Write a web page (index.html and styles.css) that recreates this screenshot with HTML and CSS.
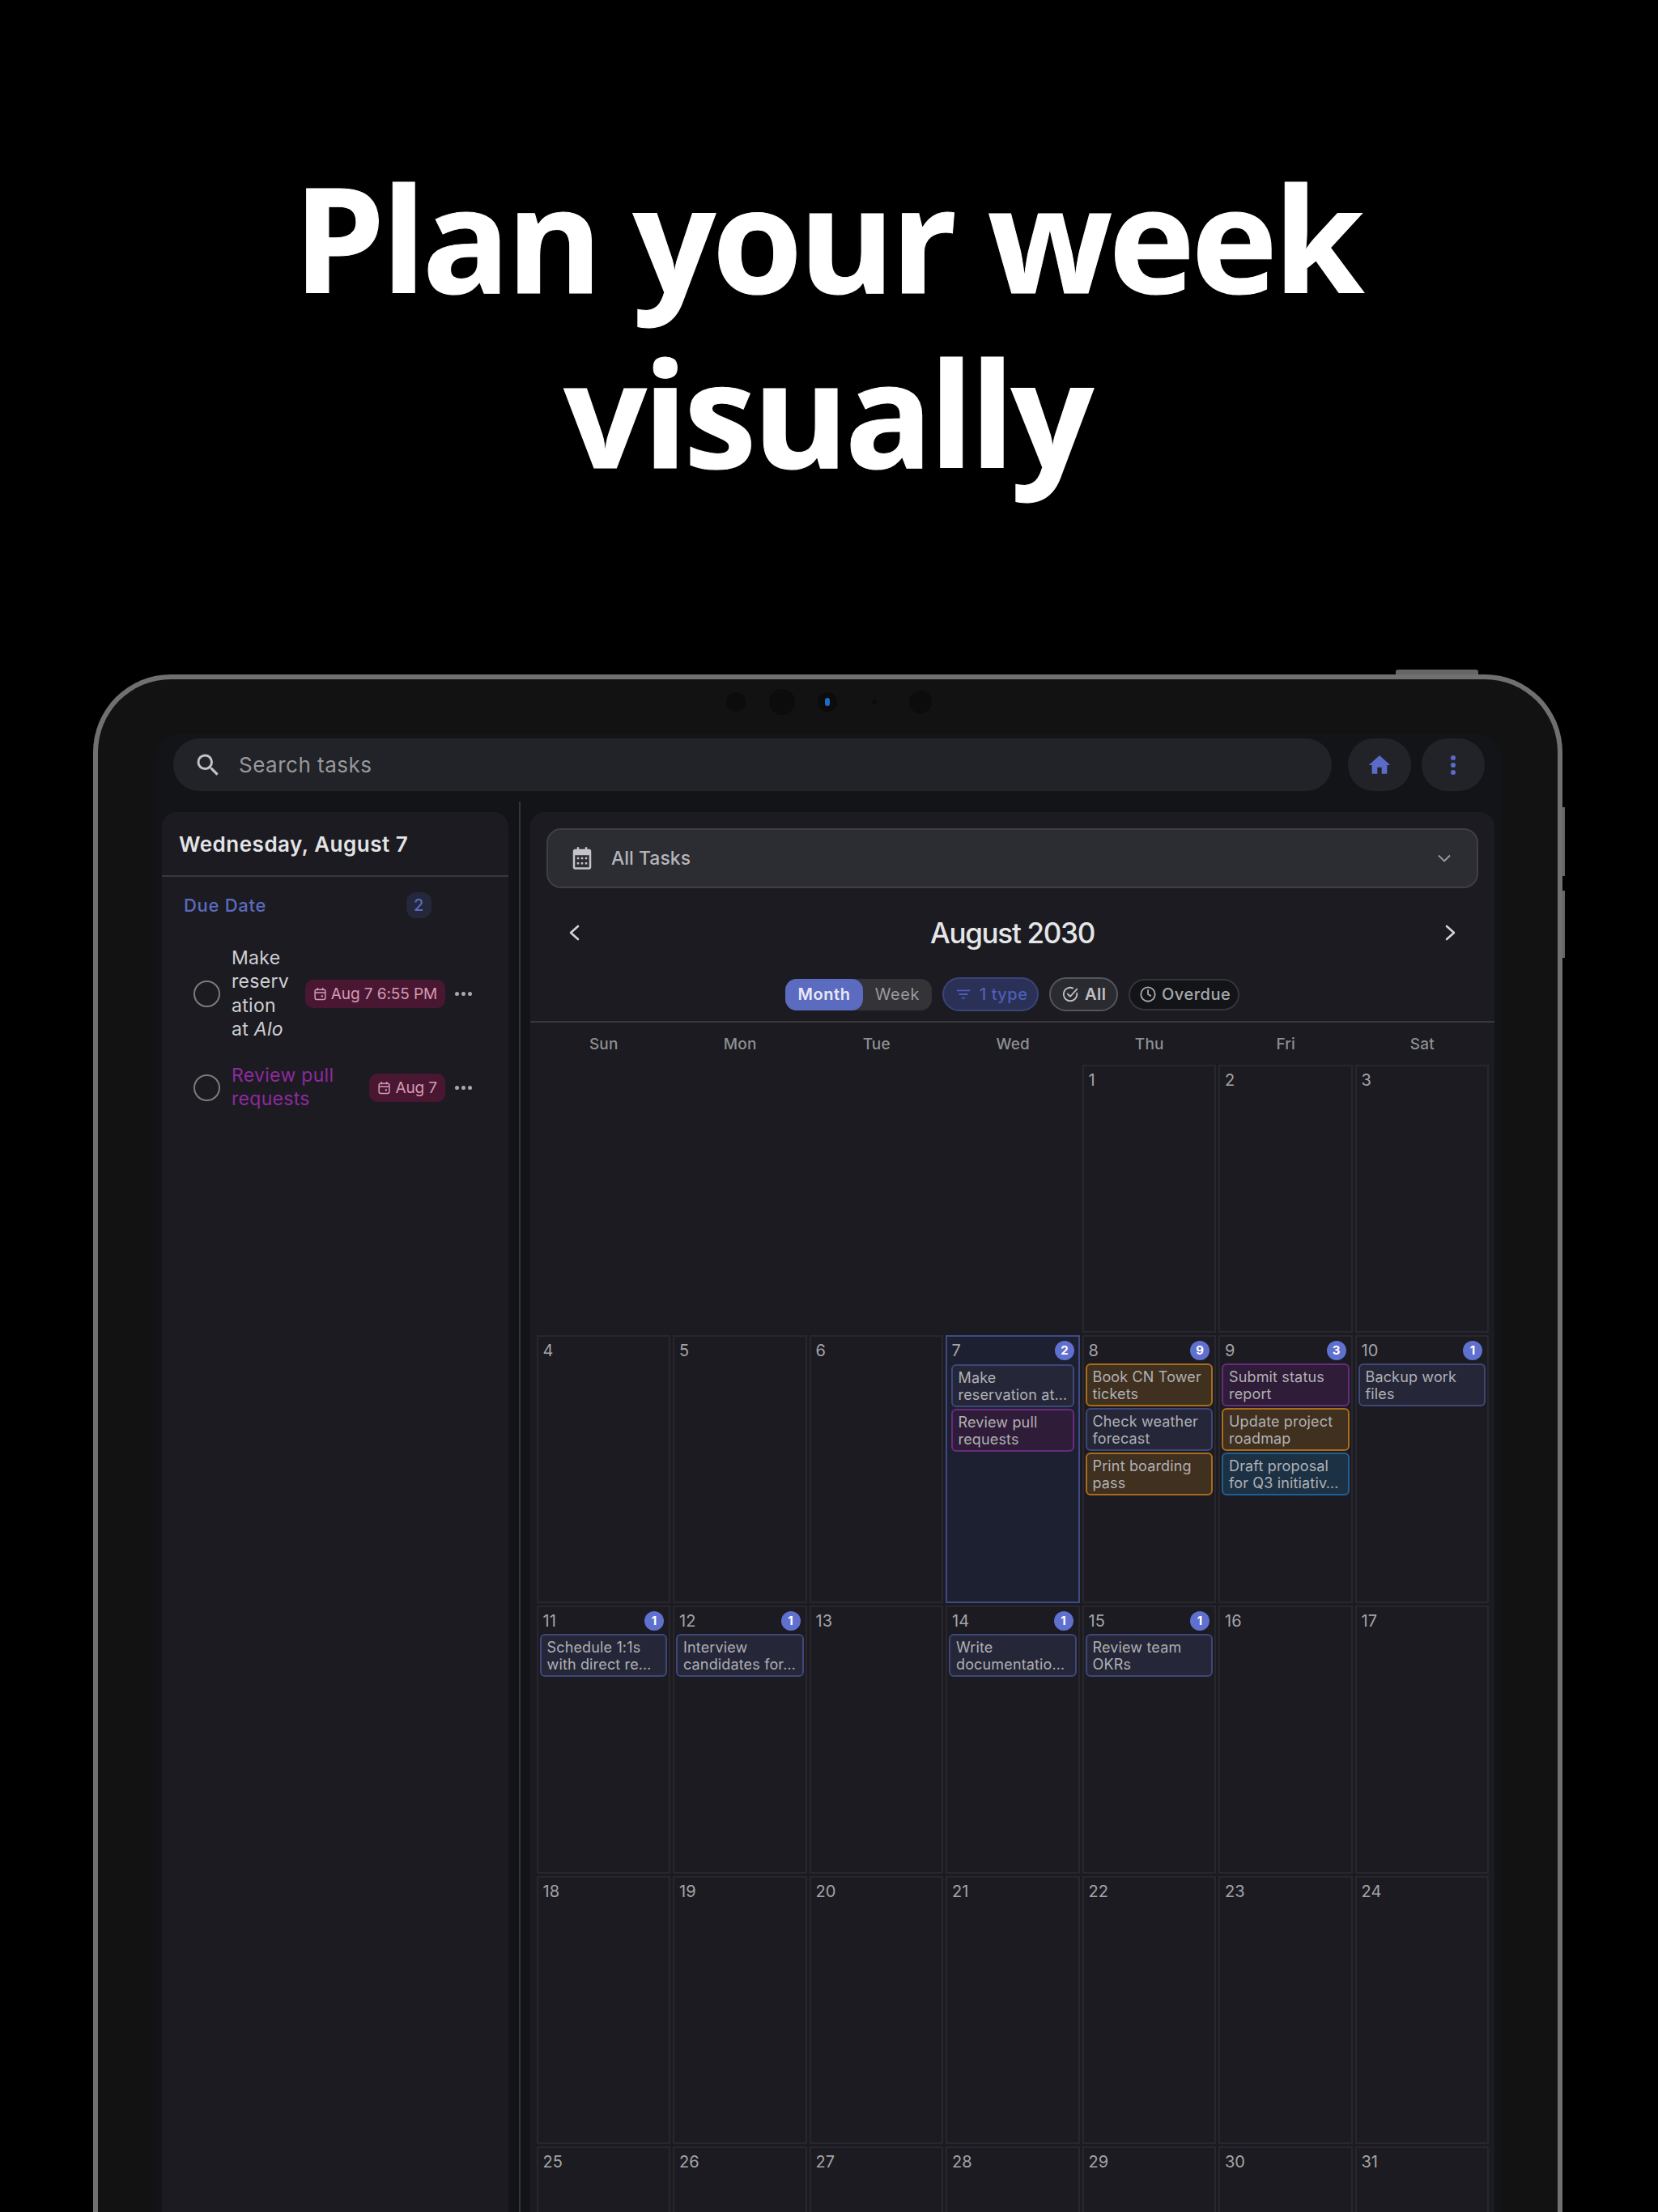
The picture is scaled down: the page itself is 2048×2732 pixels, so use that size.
FILE: index.html
```html
<!DOCTYPE html>
<html lang="en">

<head>
    <meta charset="UTF-8">
    <title>Plan your week visually</title>
    <link rel="stylesheet" href="styles.css">
</head>

<body>
    <h1 class="headline">Plan your week<br>visually</h1>

    <div class="device">
        <span class="btn-top"></span>
        <span class="btn-side btn-side-1"></span>
        <span class="btn-side btn-side-2"></span>

        <div class="cameras">
            <span class="cam cam-a"></span>
            <span class="cam cam-b"></span>
            <span class="cam cam-c"><i></i></span>
            <span class="cam cam-d"></span>
            <span class="cam cam-e"></span>
        </div>

        <div class="screen">
            <div class="topbar">
                <div class="search">
                    <svg class="search-icon" viewBox="0 0 24 24" fill="currentColor"><path d="M15.5 14h-.79l-.28-.27A6.47 6.47 0 0 0 16 9.5 6.5 6.5 0 1 0 9.5 16c1.61 0 3.09-.59 4.23-1.57l.27.28v.79l5 4.99L20.49 19l-4.99-5zm-6 0C7.01 14 5 11.99 5 9.5S7.01 5 9.5 5 14 7.01 14 9.5 11.99 14 9.5 14z"/></svg>
                    <span>Search tasks</span>
                </div>
                <div class="round-btn home-btn">
                    <svg viewBox="0 0 24 24" fill="currentColor"><path d="M10 20v-6h4v6h5v-8h3L12 3 2 12h3v8z"/></svg>
                </div>
                <div class="round-btn">
                    <svg viewBox="0 0 24 24" fill="currentColor"><circle cx="12" cy="6" r="2"/><circle cx="12" cy="12" r="2"/><circle cx="12" cy="18" r="2"/></svg>
                </div>
            </div>

            <div class="main">
                <div class="day-panel">
                    <div class="day-title">Wednesday, August 7</div>
                    <div class="section-head">
                        <span>Due Date</span>
                        <span class="section-count">2</span>
                    </div>

                    <div class="task">
                        <span class="task-circle"></span>
                        <div class="task-text">Make reservation at <em>Alo</em></div>
                        <div class="date-chip">
                            <svg viewBox="0 0 16 16" fill="none" stroke="currentColor" stroke-width="1.4"><rect x="2" y="3" width="12" height="11.5" rx="2"/><path d="M2 6.5h12M5 1v3M11 1v3"/><rect x="9.2" y="9.6" width="2" height="2" fill="currentColor" stroke="none"/></svg>
                            <span>Aug 7 6:55 PM</span>
                        </div>
                        <div class="dots"><i></i><i></i><i></i></div>
                    </div>

                    <div class="task">
                        <span class="task-circle"></span>
                        <div class="task-text task-purple">Review pull requests</div>
                        <div class="date-chip">
                            <svg viewBox="0 0 16 16" fill="none" stroke="currentColor" stroke-width="1.4"><rect x="2" y="3" width="12" height="11.5" rx="2"/><path d="M2 6.5h12M5 1v3M11 1v3"/><rect x="9.2" y="9.6" width="2" height="2" fill="currentColor" stroke="none"/></svg>
                            <span>Aug 7</span>
                        </div>
                        <div class="dots"><i></i><i></i><i></i></div>
                    </div>
                </div>

                <div class="vdivider"></div>

                <div class="cal-panel">
                    <div class="dropdown">
                        <svg class="dropdown-cal" viewBox="0 0 24 24" fill="currentColor"><path fill-rule="evenodd" d="M7 1h2v2h6V1h2v2h2c1.1 0 2 .9 2 2v16c0 1.1-.9 2-2 2H5c-1.1 0-2-.9-2-2V5c0-1.1.9-2 2-2h2V1zM5 9v12h14V9H5z"/><path d="M7 11h2v2H7zM11 11h2v2h-2zM15 11h2v2h-2zM7 16h2v2H7zM11 16h2v2h-2zM15 16h2v2h-2z"/></svg>
                        <span class="dropdown-label">All Tasks</span>
                        <svg class="dropdown-arrow" viewBox="0 0 16 10" fill="none" stroke="currentColor" stroke-width="1.8"><path d="M1 1.5l7 7 7-7"/></svg>
                    </div>

                    <div class="month-nav">
                        <svg class="nav-arrow" viewBox="0 0 14 20" fill="none" stroke="currentColor" stroke-width="2.6" stroke-linecap="round" stroke-linejoin="round"><path d="M12 2L3 10l9 8"/></svg>
                        <div class="month-title">August 2030</div>
                        <svg class="nav-arrow" viewBox="0 0 14 20" fill="none" stroke="currentColor" stroke-width="2.6" stroke-linecap="round" stroke-linejoin="round"><path d="M2 2l9 8-9 8"/></svg>
                    </div>

                    <div class="toolbar">
                        <div class="segment">
                            <span class="segment-on">Month</span>
                            <span class="segment-off">Week</span>
                        </div>
                        <div class="chip chip-type">
                            <svg viewBox="0 0 24 24" fill="currentColor"><path d="M10 18h4v-2h-4v2zM3 6v2h18V6H3zm3 7h12v-2H6v2z"/></svg>
                            <span>1 type</span>
                        </div>
                        <div class="chip chip-all">
                            <svg viewBox="0 0 24 24" fill="none" stroke="currentColor" stroke-width="2" stroke-linecap="round" stroke-linejoin="round"><path d="M21 10.5V12a9 9 0 1 1-5.3-8.2"/><path d="M8.5 11.5l3.5 3.5L21 5"/></svg>
                            <span>All</span>
                        </div>
                        <div class="chip chip-overdue">
                            <svg viewBox="0 0 24 24" fill="none" stroke="currentColor" stroke-width="2" stroke-linecap="round" stroke-linejoin="round"><circle cx="12" cy="12" r="9.5"/><path d="M12 6.5V12l3.5 2"/></svg>
                            <span>Overdue</span>
                        </div>
                    </div>

                    <div class="weekdays">
                        <span>Sun</span><span>Mon</span><span>Tue</span><span>Wed</span><span>Thu</span><span>Fri</span><span>Sat</span>
                    </div>

                    <div class="month-grid">
                        <div class="blank"></div>
                        <div class="blank"></div>
                        <div class="blank"></div>
                        <div class="blank"></div>
                        <div class="cell"><div class="cell-head"><span>1</span></div></div>
                        <div class="cell"><div class="cell-head"><span>2</span></div></div>
                        <div class="cell"><div class="cell-head"><span>3</span></div></div>

                        <div class="cell"><div class="cell-head"><span>4</span></div></div>
                        <div class="cell"><div class="cell-head"><span>5</span></div></div>
                        <div class="cell"><div class="cell-head"><span>6</span></div></div>
                        <div class="cell today">
                            <div class="cell-head"><span>7</span><b class="count">2</b></div>
                            <div class="event ev-blue"><span>Make</span><span>reservation at…</span></div>
                            <div class="event ev-purple"><span>Review pull</span><span>requests</span></div>
                        </div>
                        <div class="cell">
                            <div class="cell-head"><span>8</span><b class="count">9</b></div>
                            <div class="event ev-orange"><span>Book CN Tower</span><span>tickets</span></div>
                            <div class="event ev-blue"><span>Check weather</span><span>forecast</span></div>
                            <div class="event ev-orange"><span>Print boarding</span><span>pass</span></div>
                        </div>
                        <div class="cell">
                            <div class="cell-head"><span>9</span><b class="count">3</b></div>
                            <div class="event ev-purple"><span>Submit status</span><span>report</span></div>
                            <div class="event ev-orange"><span>Update project</span><span>roadmap</span></div>
                            <div class="event ev-teal"><span>Draft proposal</span><span>for Q3 initiativ…</span></div>
                        </div>
                        <div class="cell">
                            <div class="cell-head"><span>10</span><b class="count">1</b></div>
                            <div class="event ev-blue"><span>Backup work</span><span>files</span></div>
                        </div>

                        <div class="cell">
                            <div class="cell-head"><span>11</span><b class="count">1</b></div>
                            <div class="event ev-blue"><span>Schedule 1:1s</span><span>with direct re…</span></div>
                        </div>
                        <div class="cell">
                            <div class="cell-head"><span>12</span><b class="count">1</b></div>
                            <div class="event ev-blue"><span>Interview</span><span>candidates for…</span></div>
                        </div>
                        <div class="cell"><div class="cell-head"><span>13</span></div></div>
                        <div class="cell">
                            <div class="cell-head"><span>14</span><b class="count">1</b></div>
                            <div class="event ev-blue"><span>Write</span><span>documentatio…</span></div>
                        </div>
                        <div class="cell">
                            <div class="cell-head"><span>15</span><b class="count">1</b></div>
                            <div class="event ev-blue"><span>Review team</span><span>OKRs</span></div>
                        </div>
                        <div class="cell"><div class="cell-head"><span>16</span></div></div>
                        <div class="cell"><div class="cell-head"><span>17</span></div></div>

                        <div class="cell"><div class="cell-head"><span>18</span></div></div>
                        <div class="cell"><div class="cell-head"><span>19</span></div></div>
                        <div class="cell"><div class="cell-head"><span>20</span></div></div>
                        <div class="cell"><div class="cell-head"><span>21</span></div></div>
                        <div class="cell"><div class="cell-head"><span>22</span></div></div>
                        <div class="cell"><div class="cell-head"><span>23</span></div></div>
                        <div class="cell"><div class="cell-head"><span>24</span></div></div>

                        <div class="cell"><div class="cell-head"><span>25</span></div></div>
                        <div class="cell"><div class="cell-head"><span>26</span></div></div>
                        <div class="cell"><div class="cell-head"><span>27</span></div></div>
                        <div class="cell"><div class="cell-head"><span>28</span></div></div>
                        <div class="cell"><div class="cell-head"><span>29</span></div></div>
                        <div class="cell"><div class="cell-head"><span>30</span></div></div>
                        <div class="cell"><div class="cell-head"><span>31</span></div></div>
                    </div>
                </div>
            </div>
        </div>
    </div>
</body>

</html>
```

FILE: styles.css
```css
* {
    box-sizing: border-box;
}

html, body {
    height: 2732px;
    overflow: hidden;
}

body {
    margin: 0;
    background-color: #000;
    font-family: Inter, "Liberation Sans", sans-serif;
}

.headline {
    margin: 185px 0 216px;
    padding-right: 5px;
    text-align: center;
    font-family: "Open Sans", sans-serif;
    font-size: 180px;
    line-height: 216px;
    font-weight: 700;
    letter-spacing: -4.5px;
    -webkit-text-stroke: 1px #fff;
    color: #fff;
}

/* device frame */
.device {
    position: relative;
    width: 1815px;
    height: 1899px;
    margin-left: 115px;
    padding: 68px 69px 0 71px;
    background-color: #121212;
    border: 6px solid #707070;
    border-bottom: none;
    border-radius: 96px 96px 0 0;
}

.btn-top {
    position: absolute;
    top: -12px;
    left: 1603px;
    width: 102px;
    height: 6px;
    background-color: #666;
    border-radius: 3px 3px 0 0;
}

.btn-side {
    position: absolute;
    right: -9px;
    width: 3px;
    background-color: #666;
}

.btn-side-1 {
    top: 158px;
    height: 85px;
}

.btn-side-2 {
    top: 261px;
    height: 83px;
}

.cameras {
    position: absolute;
    top: 8px;
    left: 776px;
    height: 40px;
    display: flex;
    align-items: center;
}

.cam {
    display: flex;
    align-items: center;
    justify-content: center;
    border-radius: 50%;
    background-color: #0c0c0c;
}

.cam-a {
    width: 24px;
    height: 24px;
    margin-right: 29px;
}

.cam-b {
    width: 32px;
    height: 32px;
    margin-right: 28px;
}

.cam-c {
    width: 24px;
    height: 24px;
    margin-right: 43px;
}

.cam-c i {
    width: 6px;
    height: 10px;
    border-radius: 3px;
    background-color: #1c6cc4;
}

.cam-d {
    width: 6px;
    height: 6px;
    margin-right: 40px;
}

.cam-e {
    width: 28px;
    height: 28px;
}

.screen {
    height: 100%;
    padding: 5px 9px 0 8px;
    background-color: #121418;
    border-radius: 30px 30px 0 0;
}

/* top bar */
.topbar {
    display: flex;
    align-items: center;
    gap: 13px;
    height: 65px;
    margin: 0 12px 26px 14px;
}

.search {
    flex: 1;
    display: flex;
    align-items: center;
    height: 65px;
    margin-right: 7px;
    padding-left: 25px;
    background-color: #212328;
    border-radius: 32px;
    color: #97989c;
    font-size: 26px;
    letter-spacing: 0.5px;
}

.search-icon {
    width: 36px;
    height: 36px;
    margin-right: 20px;
    color: #c4c4c8;
}

.round-btn {
    display: flex;
    align-items: center;
    justify-content: center;
    width: 78px;
    height: 65px;
    background-color: #212328;
    border-radius: 32px;
    color: #5b6bc8;
}

.round-btn svg {
    width: 36px;
    height: 36px;
}

.home-btn svg {
    width: 32px;
    height: 32px;
}

.main {
    display: flex;
    height: 1800px;
}

/* left panel */
.day-panel {
    width: 428px;
    background-color: #1b1b21;
    border-radius: 18px 18px 0 0;
}

.day-title {
    height: 80px;
    padding: 24px 0 0 21px;
    border-bottom: 2px solid #38383c;
    font-size: 26px;
    line-height: 32px;
    font-weight: 600;
    letter-spacing: 0.5px;
    color: #e4e4e6;
}

.section-head {
    display: flex;
    align-items: center;
    justify-content: space-between;
    width: 306px;
    height: 32px;
    margin: 19px 0 35px 27px;
    font-size: 22px;
    font-weight: 500;
    letter-spacing: 0.7px;
    color: #5b6bbf;
}

.section-count {
    width: 31px;
    height: 32px;
    background-color: #24283a;
    border-radius: 12px;
    font-size: 20px;
    line-height: 32px;
    text-align: center;
}

.task {
    display: flex;
    align-items: center;
    width: 344px;
    margin: 0 0 28px 39px;
}

.task-circle {
    flex: none;
    width: 33px;
    height: 33px;
    margin-right: 14px;
    border: 2px solid #7c7c7a;
    border-radius: 50%;
}

.task-text {
    flex: 1;
    min-width: 0;
    margin-right: 13px;
    overflow-wrap: anywhere;
    font-size: 23px;
    line-height: 29.3px;
    letter-spacing: 0.3px;
    color: #cfcfd2;
}

.task-purple {
    color: #8e2a9e;
}

.date-chip {
    flex: none;
    display: flex;
    align-items: center;
    height: 35px;
    padding: 0 10px;
    background-color: #4a1732;
    border-radius: 10px;
    font-size: 19px;
    letter-spacing: -0.1px;
    color: #d49ab4;
}

.date-chip svg {
    width: 17px;
    height: 17px;
    margin-right: 5px;
}

.dots {
    flex: none;
    display: flex;
    gap: 3px;
    margin-left: 12px;
}

.dots i {
    width: 5px;
    height: 5px;
    border-radius: 50%;
    background-color: #a8a8ac;
}

.vdivider {
    flex: none;
    width: 2px;
    margin: -13px 12px 0 13px;
    background-color: #33353a;
}

/* calendar panel */
.cal-panel {
    flex: 1;
    background-color: #1b1b21;
    border-radius: 18px 18px 0 0;
}

.dropdown {
    display: flex;
    align-items: center;
    height: 74px;
    margin: 20px 20px 0;
    padding: 0 32px 0 27px;
    background-color: #2c2c33;
    border: 2px solid #3e3e44;
    border-radius: 18px;
}

.dropdown-cal {
    width: 30px;
    height: 30px;
    margin-right: 21px;
    color: #c4c4c8;
}

.dropdown-label {
    flex: 1;
    font-size: 23px;
    font-weight: 500;
    color: #b4b4b8;
}

.dropdown-arrow {
    width: 16px;
    height: 10px;
    color: #a0a0a0;
}

.month-nav {
    display: flex;
    align-items: center;
    justify-content: space-between;
    height: 40px;
    margin-top: 35px;
    padding: 0 47px;
}

.nav-arrow {
    width: 14px;
    height: 20px;
    color: #d4d4d6;
}

.month-title {
    font-size: 35px;
    font-weight: 500;
    letter-spacing: -1.3px;
    color: #e6e6e8;
}

.toolbar {
    display: flex;
    align-items: center;
    gap: 13px;
    height: 56px;
    margin-top: 35px;
    padding: 1px 0 13px 315px;
    border-bottom: 2px solid #38383c;
}

.segment {
    display: flex;
    height: 39px;
    background-color: #333338;
    border-radius: 14px;
    font-size: 20px;
    letter-spacing: 0.6px;
    line-height: 39px;
}

.segment-on {
    width: 96px;
    background-color: #5b6bc0;
    border-radius: 14px;
    font-weight: 600;
    text-align: center;
    color: #e8e8f5;
}

.segment-off {
    width: 85px;
    text-align: center;
    color: #9a9a9e;
}

.chip {
    display: flex;
    align-items: center;
    gap: 7px;
    height: 42px;
    padding: 0 13px;
    border: 2px solid #55565c;
    border-radius: 21px;
    font-size: 20px;
    font-weight: 600;
    letter-spacing: 0.5px;
    white-space: nowrap;
}

.chip svg {
    flex: none;
    width: 22px;
    height: 22px;
}

.chip-type {
    width: 119px;
    gap: 9px;
    background-color: #2b3156;
    border-color: #3a4478;
    color: #4f5fb8;
    font-weight: 500;
}

.chip-all {
    width: 85px;
    background-color: #2a2b31;
    color: #c0c0c4;
}

.chip-overdue {
    width: 137px;
    height: 39px;
    gap: 6px;
    padding: 0 11px;
    background-color: #131417;
    border-color: #34353a;
    color: #a8a8ac;
    font-weight: 500;
}

.weekdays {
    display: grid;
    grid-template-columns: repeat(7, 165.5px);
    column-gap: 3px;
    height: 52px;
    padding: 0 0 0 8px;
    align-items: center;
    font-size: 19px;
    font-weight: 500;
    letter-spacing: 0.2px;
    text-align: center;
    color: #8f8f92;
}

.month-grid {
    display: grid;
    grid-template-columns: repeat(7, 165.5px);
    grid-auto-rows: 331px;
    gap: 3px;
    margin-left: 7.5px;
}

.cell {
    padding: 0 2px;
    border: 2px solid #27272d;
}

.cell-head {
    display: flex;
    justify-content: space-between;
    height: 33px;
    padding: 5px 4px 0;
    font-size: 20px;
    line-height: 24px;
    color: #a4a4a8;
}

.count {
    width: 24px;
    height: 24px;
    background-color: #5f70cf;
    border-radius: 50%;
    font-size: 15px;
    line-height: 24px;
    text-align: center;
    color: #fff;
}

.today {
    padding: 1px 4.5px 0;
    background-color: #1c2030;
    border-color: #3f4a85;
}

.today .cell-head {
    padding: 4px 0 0 1px;
    height: 33px;
}

.event {
    height: 53px;
    margin-bottom: 2px;
    padding: 4px 4px 0 7px;
    border: 2px solid;
    border-radius: 6px;
    font-size: 18px;
    line-height: 21px;
    letter-spacing: 0.15px;
    color: #b0b0b4;
}

.event span {
    display: block;
    white-space: nowrap;
}

.ev-blue {
    background-color: #252739;
    border-color: #3e4778;
}

.ev-purple {
    background-color: #2f1c38;
    border-color: #6a2a7e;
}

.ev-orange {
    background-color: #40301f;
    border-color: #a86c1c;
}

.ev-teal {
    background-color: #1c3144;
    border-color: #225f8e;
}
```
